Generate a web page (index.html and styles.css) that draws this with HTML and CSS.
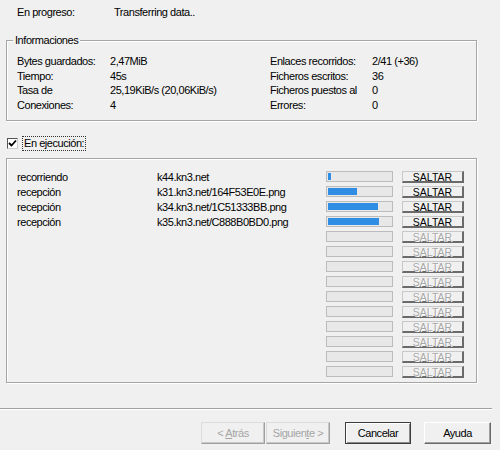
FILE: index.html
```html
<!DOCTYPE html>
<html lang="es">
<head>
<meta charset="utf-8">
<link rel="stylesheet" href="styles.css">
</head>
<body>
<div class="dialog">
  <div class="status">
    <span class="lbl">En progreso:</span>
    <span>Transferring data..</span>
  </div>

  <div class="group">
    <span class="legend">Informaciones</span>
    <div class="info">
      <span>Bytes guardados:</span><span>2,47MiB</span><span>Enlaces recorridos:</span><span>2/41 (+36)</span>
      <span>Tiempo:</span><span>45s</span><span>Ficheros escritos:</span><span>36</span>
      <span>Tasa de</span><span>25,19KiB/s (20,06KiB/s)</span><span>Ficheros puestos al</span><span>0</span>
      <span>Conexiones:</span><span>4</span><span>Errores:</span><span>0</span>
    </div>
  </div>

  <div class="check-row">
    <span class="checkbox"><svg width="9" height="9" viewBox="0 0 9 9"><path d="M1 4 L3.5 6.5 L8 1.5" fill="none" stroke="#000" stroke-width="1.8"/></svg></span>
    <span class="check-label">En ejecución:</span>
  </div>

  <div class="panel">
    <div class="row"><span class="c1">recorriendo</span><span class="c2">k44.kn3.net</span><span class="bar"><span class="fill" style="width:3px"></span></span><span class="skip">SALTAR</span></div>
    <div class="row"><span class="c1">recepción</span><span class="c2">k31.kn3.net/164F53E0E.png</span><span class="bar"><span class="fill" style="width:29px"></span></span><span class="skip">SALTAR</span></div>
    <div class="row"><span class="c1">recepción</span><span class="c2">k34.kn3.net/1C51333BB.png</span><span class="bar"><span class="fill" style="width:50px"></span></span><span class="skip">SALTAR</span></div>
    <div class="row"><span class="c1">recepción</span><span class="c2">k35.kn3.net/C888B0BD0.png</span><span class="bar"><span class="fill" style="width:51px"></span></span><span class="skip">SALTAR</span></div>
    <div class="row"><span class="c1"></span><span class="c2"></span><span class="bar"></span><span class="skip off">SALTAR</span></div>
    <div class="row"><span class="c1"></span><span class="c2"></span><span class="bar"></span><span class="skip off">SALTAR</span></div>
    <div class="row"><span class="c1"></span><span class="c2"></span><span class="bar"></span><span class="skip off">SALTAR</span></div>
    <div class="row"><span class="c1"></span><span class="c2"></span><span class="bar"></span><span class="skip off">SALTAR</span></div>
    <div class="row"><span class="c1"></span><span class="c2"></span><span class="bar"></span><span class="skip off">SALTAR</span></div>
    <div class="row"><span class="c1"></span><span class="c2"></span><span class="bar"></span><span class="skip off">SALTAR</span></div>
    <div class="row"><span class="c1"></span><span class="c2"></span><span class="bar"></span><span class="skip off">SALTAR</span></div>
    <div class="row"><span class="c1"></span><span class="c2"></span><span class="bar"></span><span class="skip off">SALTAR</span></div>
    <div class="row"><span class="c1"></span><span class="c2"></span><span class="bar"></span><span class="skip off">SALTAR</span></div>
    <div class="row"><span class="c1"></span><span class="c2"></span><span class="bar"></span><span class="skip off">SALTAR</span></div>
  </div>

  <div class="separator"></div>

  <div class="buttons">
    <span class="btn disabled back"><span>&lt; <u>A</u>trás</span></span>
    <span class="btn disabled next"><span>Siguien<u>t</u>e &gt;</span></span>
    <span class="btn default cancel"><span>Cancelar</span></span>
    <span class="btn help"><span>Ayuda</span></span>
  </div>
</div>
</body>
</html>
```

FILE: styles.css
```css
* { box-sizing: border-box; }
html, body { margin: 0; padding: 0; }
body {
  background: #f0f0f0;
  font-family: "Liberation Sans", Arial, sans-serif;
  font-size: 11px;
  letter-spacing: -0.45px;
  color: #000;
}
.dialog {
  width: 500px;
  height: 450px;
  display: flex;
  flex-direction: column;
  overflow: hidden;
}
.status {
  display: flex;
  padding: 5px 0 0 17px;
  height: 20px;
  line-height: 15px;
}
.status .lbl { width: 97px; }

.group {
  position: relative;
  margin: 20px 23px 0 6px;
  height: 81px;
  border: 1px solid #a6a6a6;
  box-shadow: inset 1px 1px 0 #fff, 1px 1px 0 #fff;
  padding: 13px 0 0 10px;
}
.legend {
  position: absolute;
  top: -8px;
  left: 6px;
  padding: 0 2px;
  line-height: 15px;
  background: #f0f0f0;
}
.info {
  display: grid;
  grid-template-columns: 93px 160px 102px 1fr;
  line-height: 14.7px;
}

.check-row {
  display: flex;
  align-items: flex-start;
  margin-top: 15px;
  height: 15px;
  padding-left: 7px;
}
.checkbox {
  width: 11px;
  height: 11px;
  margin-top: 2px;
  border: 1px solid #555;
  border-right-color: #cfcfcf;
  border-bottom-color: #cfcfcf;
  background: #fff;
  display: flex;
  align-items: center;
  justify-content: center;
}
.check-label {
  margin-left: 4px;
  line-height: 13px;
  padding: 0 1px;
  border: 1px dotted #333;
}

.panel {
  margin: 7px 23px 0 6px;
  height: 225px;
  border: 1px solid #a6a6a6;
  box-shadow: inset 1px 1px 0 #fff, 1px 1px 0 #fff;
  padding: 10px 0 0 10px;
}
.row {
  display: flex;
  align-items: center;
  height: 15px;
}
.c1 { width: 140px; }
.c2 { width: 169px; }
.bar {
  width: 67px;
  height: 11px;
  border: 1px solid #bcbcbc;
  background: #e8e8e8;
  padding: 1px;
  display: flex;
}
.fill {
  display: block;
  height: 100%;
  background: #2f8de4;
}
.skip {
  margin-left: 9px;
  width: 62px;
  height: 12px;
  font-size: 10.5px;
  letter-spacing: 0;
  line-height: 10px;
  text-align: center;
  border-top: 1px solid #c8c8c8;
  border-left: 1px solid #c8c8c8;
  border-right: 2px solid #6a6a6a;
  border-bottom: 2px solid #6a6a6a;
  background: #f0f0f0;
  color: #000;
}
.skip.off {
  color: #a8a8a8;
  text-shadow: 1px 1px 0 #fff;
}

.separator {
  margin-top: 25px;
  margin-right: 8px;
  height: 2px;
  border-top: 1px solid #a0a0a0;
  border-bottom: 1px solid #fff;
}

.buttons {
  display: flex;
  margin-top: 12px;
  padding-left: 201px;
}
.btn {
  height: 22px;
  width: 64px;
  display: flex;
  align-items: center;
  justify-content: center;
  background: #f0f0f0;
  border: 1px solid #fff;
  border-right-color: #696969;
  border-bottom-color: #696969;
  box-shadow: inset -1px -1px 0 #a0a0a0;
}
.btn u { text-decoration: underline; }
.btn.disabled {
  color: #a6a6a6;
  border-color: #dcdcdc;
  border-right-color: #a0a0a0;
  border-bottom-color: #a0a0a0;
  box-shadow: inset -1px -1px 0 #c8c8c8;
}
.next { margin-left: 1px; }
.cancel {
  margin-left: 15px;
  width: 66px;
  border: 1px solid #3c3c3c;
  box-shadow: inset 1px 1px 0 #fff, inset -1px -1px 0 #8a8a8a;
}
.help {
  margin-left: 13px;
  width: 67px;
}
```
